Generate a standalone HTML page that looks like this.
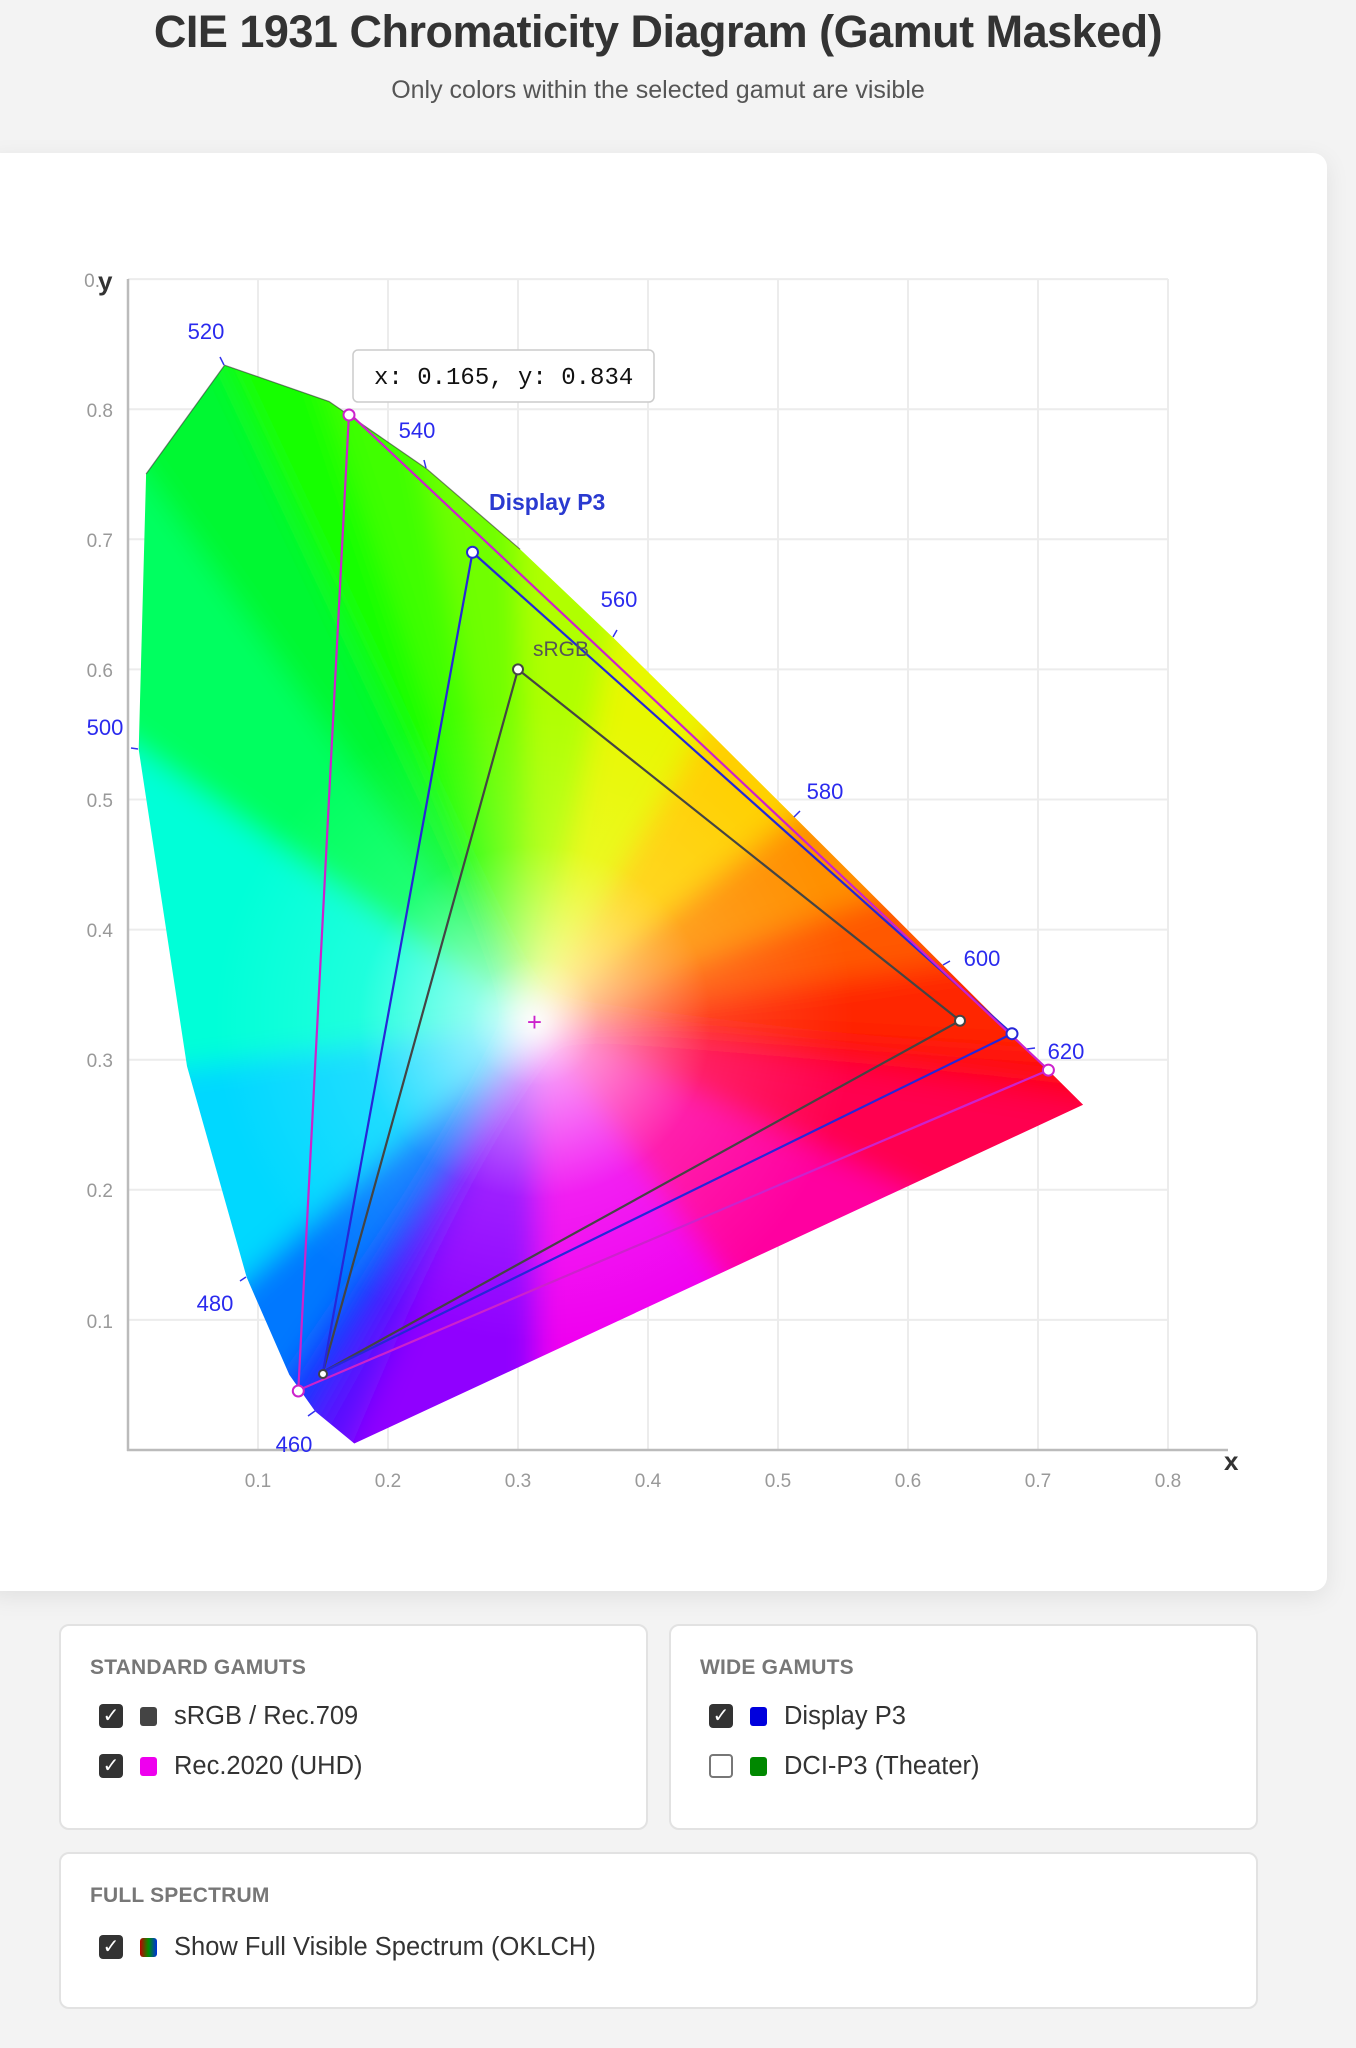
<!DOCTYPE html>
<html><head><meta charset="utf-8">
<style>
html,body{margin:0;padding:0;}
body{width:1356px;height:2048px;background:#f3f3f3;font-family:"Liberation Sans",sans-serif;position:relative;overflow:hidden;}
h1{position:absolute;left:0;width:1316px;top:6px;margin:0;text-align:center;font-size:45px;font-weight:bold;color:#333;letter-spacing:-0.5px;}
.sub{position:absolute;left:0;width:1316px;top:76px;text-align:center;font-size:25px;color:#555;}
.card{position:absolute;left:-14px;top:153px;width:1341px;height:1438px;background:#fff;border-radius:14px;box-shadow:0 6px 24px rgba(0,0,0,0.08);}
svg.plot{position:absolute;left:0;top:0;}
.panel{position:absolute;background:#fff;border:2px solid #e2e2e2;border-radius:10px;box-sizing:border-box;}
.ph{position:absolute;left:29px;font-size:21px;font-weight:bold;color:#777;letter-spacing:0.2px;}
.item{position:absolute;left:38px;height:30px;display:flex;align-items:center;font-size:25.5px;color:#333;}
.cb{width:24px;height:24px;border-radius:4px;background:#333;color:#fff;font-size:20px;line-height:24px;text-align:center;margin-right:17px;box-sizing:border-box;}
.cb.off{background:#fff;border:2px solid #777;}
.sw{width:17px;height:19px;border-radius:3px;margin-right:17px;}
</style></head><body>
<h1>CIE 1931 Chromaticity Diagram (Gamut Masked)</h1>
<div class="sub">Only colors within the selected gamut are visible</div>
<div class="card"></div>
<svg class="plot" width="1356" height="1600" viewBox="0 0 1356 1600">
<defs>
<clipPath id="loc"><polygon points="354.3,1443.5 315.2,1411.4 289.3,1374.8 246.7,1277.4 187.0,1066.2 138.7,749.5 146.1,474.0 224.6,365.2 329.1,401.5 426.5,468.7 520.1,549.3 613.0,637.5 705.3,728.3 794.3,816.9 875.8,898.1 943.1,965.4 1026.9,1048.9 1062.7,1084.5 1083.1,1104.8"/></clipPath>
<filter id="bl" filterUnits="userSpaceOnUse" x="-200" y="-100" width="1700" height="1800"><feGaussianBlur stdDeviation="14"/></filter>
<radialGradient id="wh" gradientUnits="userSpaceOnUse" cx="534.5" cy="1022" r="320">
<stop offset="0" stop-color="#fff" stop-opacity="0.97"/>
<stop offset="0.2" stop-color="#fff" stop-opacity="0.55"/>
<stop offset="0.55" stop-color="#fff" stop-opacity="0.12"/>
<stop offset="1" stop-color="#fff" stop-opacity="0"/>
</radialGradient>
</defs>
<!-- grid -->
<g stroke="#ececec" stroke-width="2">
<line x1="258" y1="279" x2="258" y2="1450"/><line x1="388" y1="279" x2="388" y2="1450"/><line x1="518" y1="279" x2="518" y2="1450"/><line x1="648" y1="279" x2="648" y2="1450"/><line x1="778" y1="279" x2="778" y2="1450"/><line x1="908" y1="279" x2="908" y2="1450"/><line x1="1038" y1="279" x2="1038" y2="1450"/><line x1="1168" y1="279" x2="1168" y2="1450"/>
<line x1="128" y1="279.1" x2="1168" y2="279.1"/><line x1="128" y1="409.2" x2="1168" y2="409.2"/><line x1="128" y1="539.3" x2="1168" y2="539.3"/><line x1="128" y1="669.4" x2="1168" y2="669.4"/><line x1="128" y1="799.5" x2="1168" y2="799.5"/><line x1="128" y1="929.6" x2="1168" y2="929.6"/><line x1="128" y1="1059.7" x2="1168" y2="1059.7"/><line x1="128" y1="1189.8" x2="1168" y2="1189.8"/><line x1="128" y1="1319.9" x2="1168" y2="1319.9"/>
</g>
<g stroke="#bbb" stroke-width="2.5"><line x1="128" y1="279" x2="128" y2="1451"/><line x1="127" y1="1450" x2="1228" y2="1450"/></g>
<!-- fill -->
<g clip-path="url(#loc)">
<g filter="url(#bl)" stroke-width="3">
<polygon points="534.5,1022 282.2,1612.1 227.5,1567.2" fill="#5a08ff" stroke="#5a08ff"/>
<polygon points="534.5,1022 227.5,1567.2 191.2,1515.9" fill="#1830ff" stroke="#1830ff"/>
<polygon points="534.5,1022 191.2,1515.9 131.6,1379.6" fill="#0078ff" stroke="#0078ff"/>
<polygon points="534.5,1022 131.6,1379.6 48.0,1083.9" fill="#00d8ff" stroke="#00d8ff"/>
<polygon points="534.5,1022 48.0,1083.9 -19.6,640.5" fill="#00ffd8" stroke="#00ffd8"/>
<polygon points="534.5,1022 -19.6,640.5 -9.3,254.8" fill="#00ff60" stroke="#00ff60"/>
<polygon points="534.5,1022 -9.3,254.8 100.6,102.5" fill="#00f830" stroke="#00f830"/>
<polygon points="534.5,1022 100.6,102.5 246.9,153.3" fill="#18ff00" stroke="#18ff00"/>
<polygon points="534.5,1022 246.9,153.3 383.3,247.4" fill="#40ff00" stroke="#40ff00"/>
<polygon points="534.5,1022 383.3,247.4 514.3,360.2" fill="#70ff00" stroke="#70ff00"/>
<polygon points="534.5,1022 514.3,360.2 644.4,483.7" fill="#b0ff00" stroke="#b0ff00"/>
<polygon points="534.5,1022 644.4,483.7 773.6,610.8" fill="#e8f800" stroke="#e8f800"/>
<polygon points="534.5,1022 773.6,610.8 898.2,734.9" fill="#ffd000" stroke="#ffd000"/>
<polygon points="534.5,1022 898.2,734.9 1012.3,848.5" fill="#ff9000" stroke="#ff9000"/>
<polygon points="534.5,1022 1012.3,848.5 1106.5,942.8" fill="#ff5800" stroke="#ff5800"/>
<polygon points="534.5,1022 1106.5,942.8 1223.9,1059.7" fill="#ff2800" stroke="#ff2800"/>
<polygon points="534.5,1022 1223.9,1059.7 1274.0,1109.5" fill="#ff0c08" stroke="#ff0c08"/>
<polygon points="534.5,1022 1274.0,1109.5 1302.5,1137.9" fill="#ff0020" stroke="#ff0020"/>
<polygon points="534.5,1022 1302.5,1137.9 1047.5,1256.5" fill="#ff0050" stroke="#ff0050"/>
<polygon points="534.5,1022 1047.5,1256.5 792.4,1375.1" fill="#ff00a0" stroke="#ff00a0"/>
<polygon points="534.5,1022 792.4,1375.1 537.3,1493.5" fill="#f000f0" stroke="#f000f0"/>
<polygon points="534.5,1022 537.3,1493.5 282.2,1612.1" fill="#9000ff" stroke="#9000ff"/>
</g>
<rect x="100" y="300" width="1100" height="1200" fill="url(#wh)"/>
</g>
<polyline points="146.1,474.0 224.6,365.2 329.1,401.5 426.5,468.7 520.1,549.3" fill="none" stroke="#333" stroke-width="1.2" opacity="0.6"/>
<!-- wavelength ticks -->
<g stroke="#3333ee" stroke-width="1.5">
<line x1="224" y1="365" x2="220" y2="357"/><line x1="426" y1="468" x2="424" y2="460"/><line x1="613" y1="637" x2="617" y2="630"/><line x1="794" y1="817" x2="800" y2="811"/><line x1="943" y1="965" x2="950" y2="961"/><line x1="1027" y1="1049" x2="1035" y2="1048"/><line x1="138" y1="749" x2="131" y2="748"/><line x1="246" y1="1277" x2="240" y2="1281"/><line x1="315" y1="1411" x2="308" y2="1416"/>
</g>
<!-- gamuts -->
<polygon points="960,1020.7 518,669.4 323,1371.9" fill="none" stroke="#444" stroke-width="2.2"/>
<polygon points="1012,1033.7 472.5,552.3 323,1371.9" fill="none" stroke="#2626d8" stroke-width="2.2"/>
<polygon points="1048.4,1070.1 349,413.1 298.3,1390.2" fill="none" stroke="#cc22cc" stroke-width="2.2"/>
<g fill="#fff" stroke-width="2">
<circle cx="960" cy="1020.7" r="5" stroke="#444"/><circle cx="518" cy="669.4" r="5" stroke="#444"/><circle cx="323" cy="1374" r="4" stroke="#444"/>
<circle cx="1012" cy="1033.7" r="5.5" stroke="#2626d8"/><circle cx="472.5" cy="552.3" r="5.5" stroke="#2626d8"/>
<circle cx="1048.4" cy="1070.1" r="5.5" stroke="#cc22cc"/><circle cx="349" cy="415" r="5.5" stroke="#cc22cc"/><circle cx="298.3" cy="1391" r="5.5" stroke="#cc22cc"/>
</g>
<text x="534.5" y="1031" text-anchor="middle" font-size="26" fill="#cc22cc" font-family="Liberation Sans">+</text>
<!-- labels -->
<g font-family="Liberation Sans" font-size="22" fill="#2a2aee" text-anchor="middle">
<text x="206" y="339">520</text><text x="417" y="438">540</text><text x="619" y="607">560</text><text x="825" y="799">580</text><text x="982" y="966">600</text><text x="1066" y="1059">620</text><text x="105" y="735">500</text><text x="215" y="1311">480</text><text x="294" y="1452">460</text>
</g>
<text x="533" y="656" font-family="Liberation Sans" font-size="21" fill="#555">sRGB</text>
<text x="489" y="510" font-family="Liberation Sans" font-size="23" font-weight="bold" fill="#2a3ad0">Display P3</text>
<g font-family="Liberation Sans" font-size="19" fill="#999" text-anchor="end">
<text x="113" y="1328">0.1</text><text x="113" y="1197">0.2</text><text x="113" y="1067">0.3</text><text x="113" y="937">0.4</text><text x="113" y="807">0.5</text><text x="113" y="677">0.6</text><text x="113" y="547">0.7</text><text x="113" y="417">0.8</text><text x="100" y="287">0.</text>
</g>
<text x="98" y="290" font-family="Liberation Sans" font-size="26" font-weight="bold" fill="#333">y</text>
<g font-family="Liberation Sans" font-size="19" fill="#999" text-anchor="middle">
<text x="258" y="1487">0.1</text><text x="388" y="1487">0.2</text><text x="518" y="1487">0.3</text><text x="648" y="1487">0.4</text><text x="778" y="1487">0.5</text><text x="908" y="1487">0.6</text><text x="1038" y="1487">0.7</text><text x="1168" y="1487">0.8</text>
</g>
<text x="1224" y="1470" font-family="Liberation Sans" font-size="26" font-weight="bold" fill="#333">x</text>
<!-- tooltip -->
<rect x="353" y="350" width="301" height="52" rx="5" fill="#fff" stroke="#ccc" stroke-width="1.5"/>
<text x="374" y="384" font-family="Liberation Mono" font-size="24" fill="#111">x: 0.165, y: 0.834</text>
</svg>

<div class="panel" style="left:59px;top:1624px;width:589px;height:206px;">
<div class="ph" style="top:30px;">STANDARD GAMUTS</div>
<div class="item" style="top:75px;"><div class="cb">✓</div><div class="sw" style="background:#444"></div>sRGB / Rec.709</div>
<div class="item" style="top:125px;"><div class="cb">✓</div><div class="sw" style="background:#ee00ee"></div>Rec.2020 (UHD)</div>
</div>
<div class="panel" style="left:669px;top:1624px;width:589px;height:206px;">
<div class="ph" style="top:30px;">WIDE GAMUTS</div>
<div class="item" style="top:75px;"><div class="cb">✓</div><div class="sw" style="background:#0000dd"></div>Display P3</div>
<div class="item" style="top:125px;"><div class="cb off"></div><div class="sw" style="background:#008800"></div>DCI-P3 (Theater)</div>
</div>
<div class="panel" style="left:59px;top:1852px;width:1199px;height:157px;">
<div class="ph" style="top:30px;">FULL SPECTRUM</div>
<div class="item" style="top:78px;"><div class="cb">✓</div><div class="sw" style="background:linear-gradient(90deg,#c00000,#009000,#0030e0)"></div>Show Full Visible Spectrum (OKLCH)</div>
</div>
</body></html>
